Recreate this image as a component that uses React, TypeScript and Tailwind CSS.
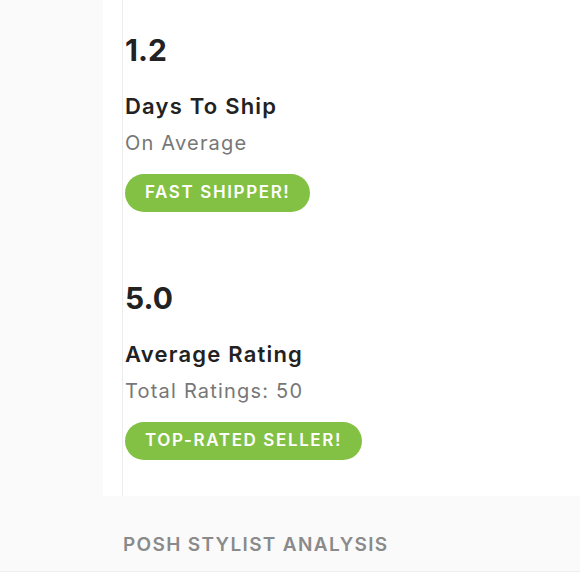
const Stat = ({
  value,
  label,
  sub,
  badge,
}: {
  value: string;
  label: string;
  sub: string;
  badge: string;
}) => (
  <div className="flex flex-col items-start">
    <div className="text-[30px] leading-[40px] font-bold text-[#222]">{value}</div>
    <div className="mt-[22px] text-[22px] leading-[28px] font-semibold tracking-[0.055em] text-[#222]">
      {label}
    </div>
    <div className="mt-[10px] text-[20px] leading-[26px] tracking-[0.06em] text-[#777]">{sub}</div>
    <span className="mt-[18px] inline-flex h-[38px] items-center rounded-full bg-[#83c145] px-[20px] text-[17px] font-semibold uppercase tracking-[0.095em] text-white">
      {badge}
    </span>
  </div>
);

export default function App() {
  return (
    <div
      className="flex h-[580px] w-[580px] flex-col overflow-hidden bg-[#fafafa]"
      style={{ fontFamily: 'Inter, "Open Sans", sans-serif' }}
    >
      {/* ── Seller stats card ── */}
      <div className="flex h-[496px] shrink-0">
        <div className="w-[103px] shrink-0" />
        <div className="flex flex-1 bg-white pl-[19px]">
          <div className="flex flex-col gap-[66px] border-l border-[#ececec] pl-[2px] pt-[30px]">
            <Stat value="1.2" label="Days To Ship" sub="On Average" badge="Fast Shipper!" />
            <Stat value="5.0" label="Average Rating" sub="Total Ratings: 50" badge="Top-Rated Seller!" />
          </div>
        </div>
      </div>

      {/* ── Section header ── */}
      <div className="flex h-[76px] shrink-0 items-center border-b border-[#efefef] pl-[123px] pt-[24px]">
        <span className="text-[19px] font-semibold uppercase tracking-[0.07em] text-[#8a8a8a]">
          Posh Stylist Analysis
        </span>
      </div>
      <div className="flex-1 bg-white" />
    </div>
  );
}
